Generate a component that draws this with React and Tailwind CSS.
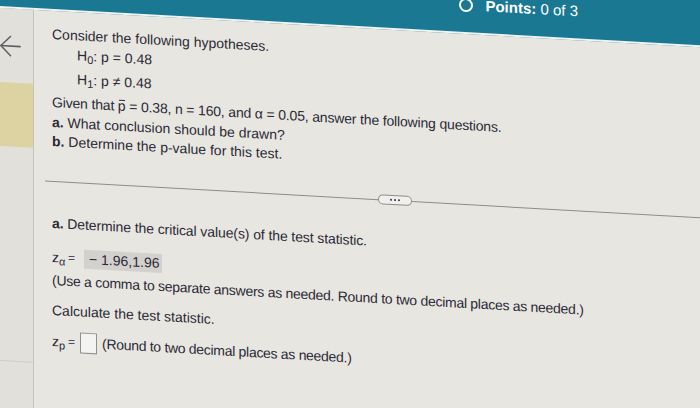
import React from "react";
import { ArrowLeft } from "lucide-react";

const txt = "text-[14px] text-[#2a2a36]";

function Sub({ children }) {
  return <span className="text-[11px] relative top-[3px]">{children}</span>;
}

export default function App() {
  return (
    <div
      className="w-[700px] h-[408px] overflow-hidden bg-[#e8e6e1]"
      style={{ fontFamily: '"Liberation Sans", Arial, sans-serif' }}
    >
      <div className="w-[700px] h-[470px] -translate-y-[40px] skew-y-[3.2deg] origin-top-left flex flex-col">
        {/* header */}
        <div className="h-[48px] shrink-0 bg-[#1a7893] border-b-2 border-[#f2f2f0] flex items-center justify-end pr-[122px] pb-[9px]">
          <div className="flex items-center gap-[12px] text-white text-[15px] leading-[16px]">
            <div className="w-[14px] h-[14px] rounded-full border-2 border-white" />
            <div>
              <span className="font-bold">Points:</span> 0 of 3
            </div>
          </div>
        </div>
        <div className="flex flex-1">
          {/* sidebar */}
          <div className="w-[34px] shrink-0 bg-[#e2e0db] border-r border-[#c6c4bf] flex flex-col">
            <div className="h-[353px] border-b border-[#cfcdc8] flex flex-col">
              <div className="pt-[21px] h-[74px] flex items-start">
                <ArrowLeft size={33} strokeWidth={1.1} className="text-[#5f5f63] -ml-[6px]" />
              </div>
              <div className="h-[64px] bg-[#ddd3a2]" />
            </div>
          </div>
          {/* main */}
          <div className={`flex-1 flex flex-col ${txt}`}>
            <div className="pl-[18px] pt-[13px] leading-[20px] h-[33px]">Consider the following hypotheses.</div>
            <div className="pl-[43px] leading-[20px] h-[20px]">
              H<Sub>0</Sub>: p = 0.48
            </div>
            <div className="pl-[43px] mt-[4px] leading-[20px] h-[20px]">
              H<Sub>1</Sub>: p ≠ 0.48
            </div>
            <div className="pl-[18px] mt-[4px] leading-[20px] h-[20px] tracking-[-0.17px]">
              Given that{" "}
              <span className="relative">
                p<span className="absolute left-[1px] top-[2px] w-[6px] h-px bg-[#2a2a36]" />
              </span>{" "}
              = 0.38, n = 160, and α = 0.05, answer the following questions.
            </div>
            <div className="pl-[18px] mt-[1px] leading-[19px] h-[19px]">
              <span className="font-bold">a.</span> What conclusion should be drawn?
            </div>
            <div className="pl-[18px] leading-[19px] h-[19px]">
              <span className="font-bold">b.</span> Determine the p-value for this test.
            </div>
            {/* divider */}
            <div className="mt-[25px] h-[10px] pl-[11px] flex items-center">
              <div className="w-[333px] h-px bg-[#8e8d8a]" />
              <div className="w-[34px] h-[10px] rounded-full border border-[#8e8d8a] bg-[#f1f0ec] flex items-center justify-center gap-[2px]">
                <div className="w-[2px] h-[2px] rounded-full bg-[#3a3a44]" />
                <div className="w-[2px] h-[2px] rounded-full bg-[#3a3a44]" />
                <div className="w-[2px] h-[2px] rounded-full bg-[#3a3a44]" />
              </div>
              <div className="flex-1 h-px bg-[#8e8d8a]" />
            </div>
            <div className="pl-[18px] mt-[27px] leading-[20px] h-[20px] tracking-[-0.1px]">
              <span className="font-bold">a.</span> Determine the critical value(s) of the test statistic.
            </div>
            <div className="pl-[18px] mt-[14px] h-[20px] flex items-center whitespace-nowrap">
              <span className="w-[15px] shrink-0">
                z<Sub>α</Sub>
              </span>
              <span className="text-[12px] ml-[1px]">=</span>
              <span className="ml-[9px] bg-[#d2d1ce] h-[19px] pl-[5px] pr-[3px] flex items-center shrink-0">
                − 1.96,1.96
              </span>
            </div>
            <div className="pl-[18px] mt-[3px] leading-[20px] h-[20px] tracking-[-0.28px]">
              (Use a comma to separate answers as needed. Round to two decimal places as needed.)
            </div>
            <div className="pl-[18px] mt-[10px] leading-[20px] h-[20px]">Calculate the test statistic.</div>
            <div className="pl-[18px] mt-[11px] h-[20px] flex items-center whitespace-nowrap">
              <span className="w-[15px] shrink-0">
                z<Sub>p</Sub>
              </span>
              <span className="text-[12px] ml-[1px]">=</span>
              <span className="ml-[5px] w-[17px] h-[21px] shrink-0 border border-[#8f8f8f] bg-[#f3f3f1]" />
              <span className="ml-[5px] tracking-[-0.3px]">(Round to two decimal places as needed.)</span>
            </div>
          </div>
        </div>
      </div>
    </div>
  );
}
